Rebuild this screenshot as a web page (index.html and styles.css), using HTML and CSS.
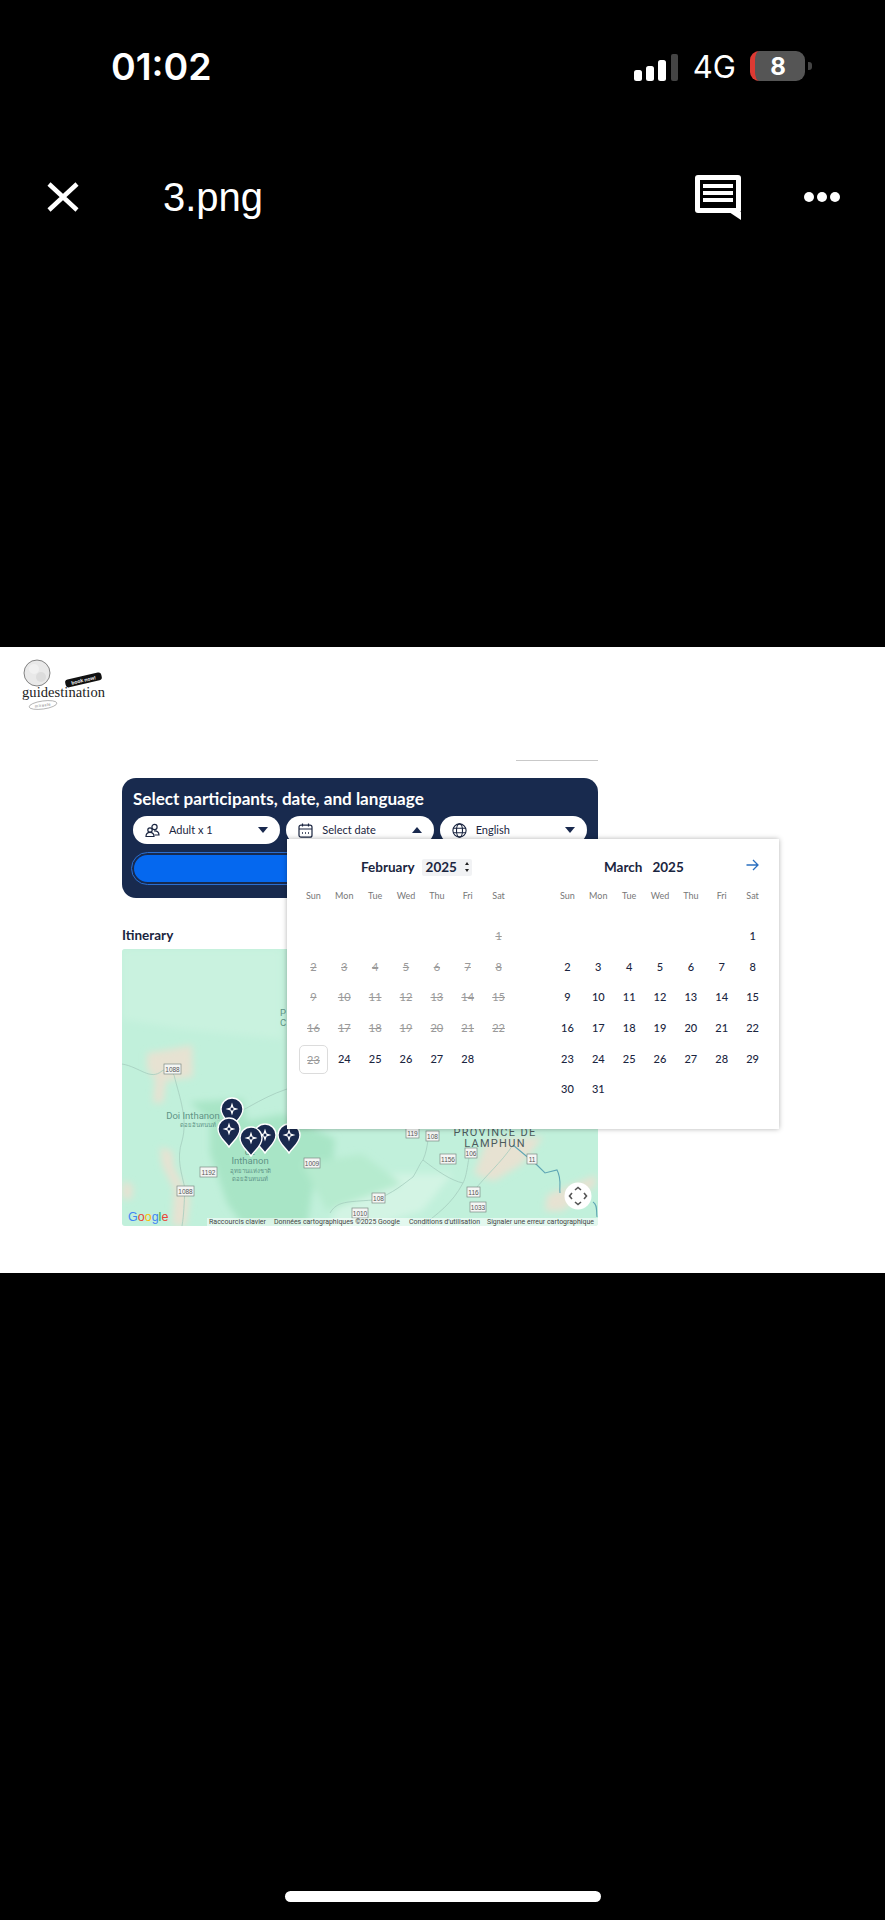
FILE: index.html
```html
<!DOCTYPE html>
<html>
<head>
  <title>3.png</title>
  <link rel="stylesheet" href="styles.css">
</head>
<body>
  <div class="viewer-top">
    <div class="status-bar">
      <span class="clock">01:02</span>
      <svg class="signal" width="44" height="28" viewBox="0 0 44 28">
        <rect x="0" y="16" width="8" height="11" rx="2.5" fill="#fff"/>
        <rect x="12" y="12" width="8" height="15" rx="2.5" fill="#fff"/>
        <rect x="24" y="6" width="8" height="21" rx="2.5" fill="#fff"/>
        <rect x="37" y="0" width="7" height="27" rx="2" fill="#444"/>
      </svg>
      <span class="network">4G</span>
      <span class="battery">8</span>
      <span class="battery-nub"></span>
    </div>
    <div class="viewer-nav">
      <svg class="close-icon" width="32" height="30" viewBox="0 0 32 30">
        <path d="M2 2 L30 28 M30 2 L2 28" stroke="#fff" stroke-width="4.5" fill="none"/>
      </svg>
      <span class="file-name">3.png</span>
      <svg class="comment-icon" width="46" height="45" viewBox="0 0 46 45">
        <rect x="0" y="0" width="46" height="38" rx="3" fill="#fff"/>
        <path d="M34 37 H46 V45 Z" fill="#fff"/>
        <rect x="5" y="5" width="36" height="28" fill="#000"/>
        <rect x="8" y="9" width="30" height="4" fill="#fff"/>
        <rect x="8" y="16" width="30" height="4" fill="#fff"/>
        <rect x="8" y="23" width="30" height="4" fill="#fff"/>
      </svg>
      <div class="dots"><i></i><i></i><i></i></div>
    </div>
  </div>

  <div class="sheet">
    <svg class="logo" width="90" height="55" viewBox="0 0 90 55">
      <circle cx="17" cy="18" r="13" fill="#e9e9e9" stroke="#666" stroke-width="0.8"/>
      <circle cx="14" cy="14" r="5" fill="#f1f1f1"/>
      <circle cx="21" cy="22" r="5" fill="#dcdcdc"/>
      <text x="2" y="42" class="logo-word" textLength="83">guidestination</text>
      <g transform="rotate(-13 63 25)">
        <rect x="45" y="21" width="37" height="8" rx="3" fill="#111"/>
        <text x="63.5" y="27" class="logo-tag" text-anchor="middle">book now!</text>
      </g>
      <g transform="rotate(-8 23 50)">
        <ellipse cx="23" cy="50" rx="14" ry="4" fill="none" stroke="#888" stroke-width="0.6"/>
        <text x="23" y="51.5" class="logo-sub" text-anchor="middle">miracle</text>
      </g>
    </svg>

    <div class="content">
      <div class="top-rule"></div>
      <div class="booking-panel">
        <h2 class="panel-title">Select participants, date, and language</h2>
        <div class="pill-row">
          <div class="pill">
            <svg class="pill-icon" width="15" height="15" viewBox="0 0 15 15" fill="none" stroke="#1a2540" stroke-width="1.2">
              <circle cx="9.5" cy="4" r="2.6"/>
              <circle cx="5" cy="7" r="2.2"/>
              <path d="M1 13.5 C1 10 3 9.4 5 9.4 C7 9.4 9 10 9 13.5 Z"/>
              <path d="M9 8 C12 7.6 14 9 14 12 H9.5"/>
            </svg>
            <span>Adult x 1</span>
            <i class="caret"></i>
          </div>
          <div class="pill">
            <svg class="pill-icon" width="15" height="15" viewBox="0 0 15 15" fill="none" stroke="#1a2540" stroke-width="1.2">
              <rect x="1" y="2.2" width="13" height="12" rx="2"/>
              <path d="M1 6 H14 M4.5 0.5 V3.5 M10.5 0.5 V3.5"/>
              <path d="M4 10 H5 M7 10 H8 M10 10 H11" stroke-width="1.4"/>
            </svg>
            <span>Select date</span>
            <i class="caret caret-up"></i>
          </div>
          <div class="pill">
            <svg class="pill-icon" width="15" height="15" viewBox="0 0 15 15" fill="none" stroke="#1a2540" stroke-width="1.1">
              <circle cx="7.5" cy="7.5" r="6.6"/>
              <ellipse cx="7.5" cy="7.5" rx="3" ry="6.6"/>
              <path d="M1 5.3 H14 M1 9.7 H14"/>
            </svg>
            <span>English</span>
            <i class="caret"></i>
          </div>
        </div>
        <button class="book-btn"></button>
      </div>

      <h3 class="itinerary-title">Itinerary</h3>
      <div class="map">
        <svg width="476" height="277" viewBox="0 0 476 277">
          <defs>
            <filter id="soft"><feGaussianBlur stdDeviation="3.5"/></filter>
            <g id="pin">
              <path d="M11 0 A11 11 0 0 1 22 11 C22 19 15 23 11 29 C7 23 0 19 0 11 A11 11 0 0 1 11 0 Z" fill="#19294e" stroke="#fff" stroke-width="1.4"/>
              <path d="M11 4.5 L12.6 9.4 L17.5 11 L12.6 12.6 L11 17.5 L9.4 12.6 L4.5 11 L9.4 9.4 Z" fill="#fff"/>
              <circle cx="11" cy="11" r="1.5" fill="#19294e"/>
            </g>
          </defs>
          <rect width="476" height="277" fill="#c1f0db"/>
          <g filter="url(#soft)">
            <path d="M68 153 L121 150 L125 172 L160 165 L213 190 L211 211 L191 238 L185 277 L121 277 L105 254 L88 204 L88 172 Z" fill="#a8e5c6"/>
            <g fill="#f0dfd0" opacity="0.8">
              <path d="M25 104 L50 100 L70 96 L71 128 L44 132 L41 154 L31 154 L33 130 L25 120 Z"/>
              <path d="M38 198 L50 202 L52 218 L68 250 L64 277 L50 277 L52 240 L40 216 Z"/>
              <path d="M0 232 L11 236 L10 250 L0 250 Z"/>
              <path d="M365 190 L421 188 L400 215 L372 232 L352 225 Z"/>
              <path d="M425 246 L474 226 L474 236 L440 262 L423 262 Z"/>
            </g>
            <path d="M220 240 L262 225 L330 225 L300 262 L250 277 L208 277 Z" fill="#d3f4e4"/>
            <path d="M0 0 H160 V90 L60 80 L0 70 Z" fill="#c9f2df"/>
            <path d="M180 215 L240 205 L280 235 L205 262 Z" fill="#b6ebcf"/>
          </g>
          <g fill="none" stroke="#a5cdbe" stroke-width="0.8">
            <path d="M0 115 C18 118 28 132 40 122 C46 118 48 122 52 126 C58 150 66 170 60 192 C54 210 60 225 63 240 C62 255 62 265 60 277"/>
            <path d="M95 172 C120 165 135 150 165 140 C185 130 190 150 205 152"/>
            <path d="M208 264 C215 252 225 253 251 251 C270 246 285 232 291 228 C296 220 298 214 301 211 C304 204 305 198 306 191"/>
            <path d="M301 211 C315 222 330 232 341 234 C346 225 346 205 349 204"/>
            <path d="M341 234 C330 255 315 265 300 277"/>
            <path d="M351 243 C365 225 378 215 391 196"/>
          </g>
          <path d="M391 196 L415 216 L423 224 L435 221 C440 230 437 238 438 244 M471 253 C476 256 474 262 475 268" fill="none" stroke="#5fa6b4" stroke-width="1.1"/>

          <g class="map-place">
            <text x="71" y="170" text-anchor="middle">Doi Inthanon</text>
            <text x="128" y="206" text-anchor="middle">de</text>
            <text x="128" y="215" text-anchor="middle">Inthanon</text>
            <text x="158" y="67">P</text>
            <text x="158" y="77">C</text>
          </g>
          <g class="map-thai">
            <text x="76" y="178" text-anchor="middle">ดอยอินทนนท์</text>
            <text x="128" y="224" text-anchor="middle">อุทยานแห่งชาติ</text>
            <text x="128" y="232" text-anchor="middle">ดอยอินทนนท์</text>
          </g>
          <text x="373" y="187" text-anchor="middle" class="map-region">PROVINCE DE</text>
          <text x="373" y="198" text-anchor="middle" class="map-region">LAMPHUN</text>

          <g class="shield">
            <rect x="42" y="115" width="17" height="10"/><text x="50.5" y="123" text-anchor="middle">1088</text>
            <rect x="78" y="218" width="17" height="10"/><text x="86.5" y="226" text-anchor="middle">1192</text>
            <rect x="55" y="237" width="17" height="10"/><text x="63.5" y="245" text-anchor="middle">1088</text>
            <rect x="182" y="209" width="16" height="10"/><text x="190" y="217" text-anchor="middle">1009</text>
            <rect x="284" y="179" width="13" height="10"/><text x="290.5" y="187" text-anchor="middle">119</text>
            <rect x="304" y="182" width="13" height="10"/><text x="310.5" y="190" text-anchor="middle">108</text>
            <rect x="343" y="199" width="12" height="10"/><text x="349" y="207" text-anchor="middle">106</text>
            <rect x="318" y="205" width="16" height="10"/><text x="326" y="213" text-anchor="middle">1156</text>
            <rect x="405" y="205" width="10" height="10"/><text x="410" y="213" text-anchor="middle">11</text>
            <rect x="345" y="238" width="13" height="10"/><text x="351.5" y="246" text-anchor="middle">116</text>
            <rect x="348" y="253" width="16" height="10"/><text x="356" y="261" text-anchor="middle">1033</text>
            <rect x="250" y="244" width="13" height="10"/><text x="256.5" y="252" text-anchor="middle">108</text>
            <rect x="230" y="259" width="16" height="10"/><text x="238" y="267" text-anchor="middle">1010</text>
          </g>

          <use href="#pin" x="99" y="149"/>
          <use href="#pin" x="156" y="175"/>
          <use href="#pin" x="132" y="175"/>
          <use href="#pin" x="96" y="169"/>
          <use href="#pin" x="118" y="178"/>

          <circle cx="456" cy="247" r="13.5" fill="#fff"/>
          <path d="M453 241 L456 238.5 L459 241 M453 253 L456 255.5 L459 253 M450 244 L447.5 247 L450 250 M462 244 L464.5 247 L462 250" fill="none" stroke="#555" stroke-width="1.6"/>

          <text x="6" y="272" class="google-mark"><tspan fill="#4285f4">G</tspan><tspan fill="#ea4335">o</tspan><tspan fill="#fbbc05">o</tspan><tspan fill="#4285f4">g</tspan><tspan fill="#34a853">l</tspan><tspan fill="#ea4335">e</tspan></text>
          <rect x="85" y="269" width="391" height="8" fill="#fff" opacity="0.55"/>
          <g class="map-credit">
            <text x="87" y="275" textLength="57" lengthAdjust="spacingAndGlyphs">Raccourcis clavier</text>
            <text x="152" y="275" textLength="126" lengthAdjust="spacingAndGlyphs">Données cartographiques ©2025 Google</text>
            <text x="287" y="275" textLength="71" lengthAdjust="spacingAndGlyphs">Conditions d'utilisation</text>
            <text x="365" y="275" textLength="107" lengthAdjust="spacingAndGlyphs">Signaler une erreur cartographique</text>
          </g>
        </svg>
      </div>
    </div>

    <!-- date picker opens over the panel and the map -->
    <div class="datepicker">
      <div class="month">
        <div class="month-head month-head-feb">
          <span>February</span>
          <span class="year-box">2025<span class="spin"><i></i><i class="down"></i></span></span>
        </div>
        <div class="weekdays"><span>Sun</span><span>Mon</span><span>Tue</span><span>Wed</span><span>Thu</span><span>Fri</span><span>Sat</span></div>
        <div class="days">
          <span class="off on-sat">1</span>
          <span class="off">2</span><span class="off">3</span><span class="off">4</span><span class="off">5</span><span class="off">6</span><span class="off">7</span><span class="off">8</span>
          <span class="off">9</span><span class="off">10</span><span class="off">11</span><span class="off">12</span><span class="off">13</span><span class="off">14</span><span class="off">15</span>
          <span class="off">16</span><span class="off">17</span><span class="off">18</span><span class="off">19</span><span class="off">20</span><span class="off">21</span><span class="off">22</span>
          <span class="off today">23</span><span>24</span><span>25</span><span>26</span><span>27</span><span>28</span>
        </div>
      </div>
      <div class="month">
        <div class="month-head month-head-mar">
          <span>March</span>
          <span class="year-plain">2025</span>
          <svg class="next-arrow" width="13" height="12" viewBox="0 0 13 12" fill="none" stroke="#2a6fc0" stroke-width="1.3">
            <path d="M0.5 6 H12 M7 1 L12 6 L7 11"/>
          </svg>
        </div>
        <div class="weekdays"><span>Sun</span><span>Mon</span><span>Tue</span><span>Wed</span><span>Thu</span><span>Fri</span><span>Sat</span></div>
        <div class="days">
          <span class="on-sat">1</span>
          <span>2</span><span>3</span><span>4</span><span>5</span><span>6</span><span>7</span><span>8</span>
          <span>9</span><span>10</span><span>11</span><span>12</span><span>13</span><span>14</span><span>15</span>
          <span>16</span><span>17</span><span>18</span><span>19</span><span>20</span><span>21</span><span>22</span>
          <span>23</span><span>24</span><span>25</span><span>26</span><span>27</span><span>28</span><span>29</span>
          <span>30</span><span>31</span>
        </div>
      </div>
    </div>
  </div>

  <div class="home-zone"><div class="home-bar"></div></div>
</body>
</html>
```

FILE: styles.css
```css
* {
  box-sizing: border-box;
}
html, body {
  margin: 0;
  padding: 0;
}
body {
  width: 885px;
  height: 1920px;
  overflow: hidden;
  background-color: #000;
  color: #1a2540;
  font-family: Lato, "Noto Sans", sans-serif;
}

/* black viewer chrome */
.viewer-top {
  height: 647px;
  padding-top: 45px;
  color: #fff;
}
.status-bar {
  display: flex;
  align-items: center;
  height: 42px;
  padding-left: 111px;
}
.clock {
  font-family: Inter, sans-serif;
  font-size: 37.5px;
  font-weight: 600;
}
.signal {
  margin-left: auto;
  margin-top: 3px;
}
.network {
  margin-left: 15px;
  font-family: Inter, sans-serif;
  font-size: 31px;
  font-weight: 400;
}
.battery {
  display: flex;
  align-items: center;
  justify-content: center;
  width: 55px;
  height: 30px;
  margin-left: 14px;
  padding-right: 4px;
  border-left: 5px solid #dd3a33;
  border-radius: 9px;
  background-color: #555;
  font-family: Inter, sans-serif;
  font-size: 24px;
  font-weight: 700;
}
.battery-nub {
  width: 4px;
  height: 8px;
  margin-left: 3px;
  margin-right: 73px;
  border-radius: 0 3px 3px 0;
  background-color: #444;
}
.viewer-nav {
  display: flex;
  align-items: center;
  height: 48px;
  margin-top: 86px;
  padding: 0 45px 0 47px;
}
.file-name {
  margin-left: 84px;
  font-family: "Liberation Sans", sans-serif;
  font-size: 40px;
}
.comment-icon {
  margin-left: auto;
}
.dots {
  display: flex;
  gap: 3px;
  margin-left: 63px;
}
.dots i {
  width: 10px;
  height: 10px;
  border-radius: 50%;
  background-color: #fff;
}

/* white screenshot */
.sheet {
  position: relative;
  height: 626px;
  padding-top: 8px;
  background-color: #fff;
}
.logo {
  display: block;
  margin-left: 20px;
}
.logo-word {
  font-family: "Liberation Serif", serif;
  font-size: 14.5px;
  fill: #222;
}
.logo-tag {
  font-family: "Liberation Sans", sans-serif;
  font-size: 5px;
  font-weight: 700;
  fill: #fff;
}
.logo-sub {
  font-family: "Liberation Sans", sans-serif;
  font-size: 4px;
  letter-spacing: 0.5px;
  fill: #777;
}
.content {
  width: 476px;
  margin-left: 122px;
}
.top-rule {
  width: 82px;
  height: 1px;
  margin: 50px 0 0 394px;
  background-color: #c9c9c9;
}
.booking-panel {
  height: 120px;
  margin-top: 17px;
  padding: 11px 11px 0;
  border-radius: 14px;
  background-color: #182a4e;
}
.panel-title {
  margin: 0;
  color: #fff;
  font-size: 17.1px;
  font-weight: 700;
  line-height: 20px;
}
.pill-row {
  display: flex;
  gap: 6px;
  margin-top: 7px;
}
.pill {
  display: flex;
  flex: 1;
  align-items: center;
  height: 28px;
  padding: 0 12px;
  border-radius: 14px;
  background-color: #fff;
  font-size: 11px;
}
.pill span {
  margin: 0 0 2px 9px;
}
.caret {
  width: 0;
  height: 0;
  margin-left: auto;
  border-left: 5.5px solid transparent;
  border-right: 5.5px solid transparent;
  border-top: 6.5px solid #19294e;
}
.caret-up {
  border-top: 0;
  border-bottom: 6.5px solid #19294e;
}
.book-btn {
  display: block;
  width: 456px;
  height: 33px;
  margin: 8px 0 0 -2px;
  padding: 2px;
  border: 1px solid #2a6ed0;
  border-radius: 17px;
  background-color: #0568ef;
  background-clip: content-box;
}
.itinerary-title {
  margin: 28px 0 0;
  font-size: 13.5px;
  font-weight: 700;
  line-height: 18px;
}
.map {
  height: 277px;
  margin-top: 5px;
  overflow: hidden;
  border-radius: 3px;
}
.map svg {
  display: block;
}
.map-place text {
  font-family: Roboto, sans-serif;
  font-size: 9.5px;
  fill: #5f9486;
}
.map-thai text {
  font-family: "Noto Sans", "DejaVu Sans", sans-serif;
  font-size: 6px;
  fill: #5f9486;
}
.map-region {
  font-family: Roboto, sans-serif;
  font-size: 11px;
  letter-spacing: 1.3px;
  fill: #4c5a5c;
}
.shield rect {
  fill: #f4f6f4;
  stroke: #7c8a84;
  stroke-width: 0.7;
}
.shield text {
  font-family: "Liberation Sans", sans-serif;
  font-size: 6.5px;
  fill: #555;
}
.google-mark {
  font-family: "Liberation Sans", sans-serif;
  font-size: 12.5px;
}
.map-credit text {
  font-family: Roboto, sans-serif;
  font-size: 6.6px;
  fill: #444;
}

/* date picker */
.datepicker {
  position: absolute;
  top: 192px;
  left: 287px;
  display: flex;
  gap: 38px;
  width: 492px;
  height: 290px;
  padding: 18px 11px 0;
  background-color: #fff;
  box-shadow: 0 0 5px rgba(0, 0, 0, 0.3);
}
.month {
  width: 216px;
}
.month-head {
  display: flex;
  align-items: center;
  height: 20px;
  font-size: 13.5px;
  font-weight: 700;
}
.month-head-feb {
  padding-left: 63px;
}
.month-head-mar {
  padding-left: 52px;
}
.year-box {
  display: flex;
  align-items: center;
  height: 17px;
  margin-left: 7px;
  padding-left: 4px;
  border-radius: 2px;
  background-color: #f1f2f4;
}
.year-plain {
  margin-left: 10px;
}
.spin {
  display: flex;
  flex-direction: column;
  gap: 4px;
  margin-left: 8px;
  padding-right: 3px;
}
.spin i {
  width: 0;
  height: 0;
  border-left: 2.5px solid transparent;
  border-right: 2.5px solid transparent;
  border-bottom: 3px solid #222;
}
.spin .down {
  border-bottom: 0;
  border-top: 3px solid #222;
}
.next-arrow {
  margin: -4px 9px 0 auto;
}
.weekdays {
  display: grid;
  grid-template-columns: repeat(7, 1fr);
  height: 18px;
  margin-top: 10px;
  color: #777;
  font-size: 9px;
  line-height: 18px;
  text-align: center;
}
.days {
  display: grid;
  grid-template-columns: repeat(7, 1fr);
  grid-auto-rows: 30.7px;
  margin-top: 16px;
  font-size: 11px;
  font-weight: 500;
  line-height: 30.7px;
  text-align: center;
}
.on-sat {
  grid-column-start: 7;
}
.days .off {
  color: #9a9a9a;
  font-weight: 400;
  text-decoration: line-through;
}
.days .today {
  width: 29px;
  height: 29px;
  margin: 1px 0 0 1px;
  border: 1.5px solid #dcdcdc;
  border-radius: 5px;
  line-height: 27px;
}

.home-zone {
  padding-top: 618px;
}
.home-bar {
  width: 316px;
  height: 11px;
  margin-left: 285px;
  border-radius: 6px;
  background-color: #fff;
}
```
